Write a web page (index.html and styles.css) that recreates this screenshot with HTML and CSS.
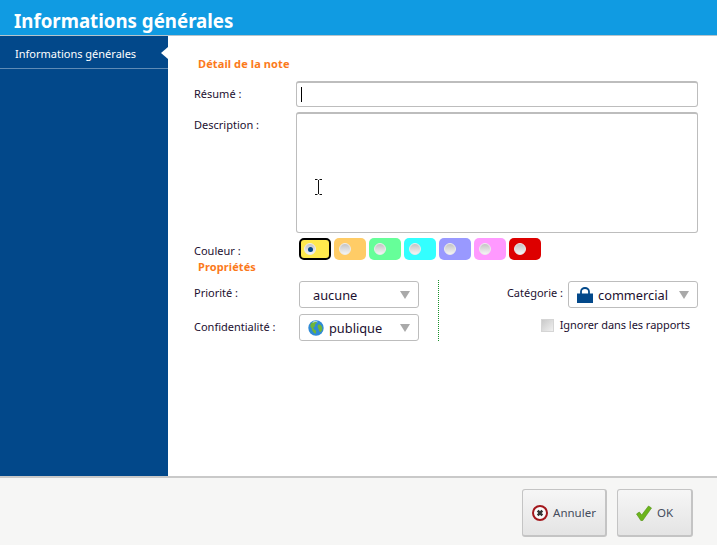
FILE: index.html
```html
<!DOCTYPE html>
<html lang="fr">
<head>
<meta charset="utf-8">
<title>Informations générales</title>
<link rel="stylesheet" href="styles.css">
</head>
<body>
<div class="app">
  <header class="header">Informations générales</header>
  <div class="main">
    <nav class="sidebar">
      <div class="nav-item">Informations générales<span class="nav-arrow"></span></div>
    </nav>
    <section class="content">
      <h2 class="section-title first">Détail de la note</h2>
      <div class="row row-resume">
        <label class="label">Résumé :</label>
        <div class="input"><span class="caret"></span></div>
      </div>
      <div class="row row-desc">
        <label class="label">Description :</label>
        <div class="textarea">
          <svg class="ibeam" width="7" height="16" viewBox="0 0 7 16"><path d="M0 .5h2.500M4.500 .5H7M3.500 1v14M0 15.500h2.500M4.500 15.500H7" fill="none" stroke="#111" stroke-width="1"/></svg>
        </div>
      </div>
      <div class="row row-color">
        <label class="label">Couleur :</label>
        <div class="swatches">
          <span class="swatch sw-yellow selected"><i class="radio on"></i></span>
          <span class="swatch sw-orange"><i class="radio"></i></span>
          <span class="swatch sw-green"><i class="radio"></i></span>
          <span class="swatch sw-cyan"><i class="radio"></i></span>
          <span class="swatch sw-blue"><i class="radio"></i></span>
          <span class="swatch sw-pink"><i class="radio"></i></span>
          <span class="swatch sw-red"><i class="radio"></i></span>
        </div>
      </div>
      <h2 class="section-title second">Propriétés</h2>
      <div class="props">
        <div class="props-left">
          <div class="prop-row">
            <label class="label">Priorité :</label>
            <div class="select sel-left"><span class="sel-text plain">aucune</span><span class="arrow"></span></div>
          </div>
          <div class="prop-row">
            <label class="label">Confidentialité :</label>
            <div class="select sel-left">
              <svg class="globe" width="16" height="16" viewBox="0 0 17 17"><circle cx="8.500" cy="8.500" r="8.200" fill="#2f8ad6"/><path d="M3 4c2-2 4-3 6-2.500 1 1 0 2-1 2.500S8 7 6.500 7.500 6 10 7.500 10.500 9 13 8 14.500C6 14 4 11 4 9 2.500 8 2 6 3 4zM11 5c2-.5 3.500 1 4 3s0 4-2 5c-1.500-1-1.500-3-2-4s-1.500-3 0-4z" fill="#6fb53a"/><path d="M5 2.500c2-1.200 4-1 5-.5" stroke="#cfe6f5" stroke-width="1" fill="none"/></svg>
              <span class="sel-text">publique</span><span class="arrow"></span>
            </div>
          </div>
        </div>
        <div class="props-divider"></div>
        <div class="props-right">
          <div class="prop-row cat-row">
            <label class="label">Catégorie :</label>
            <div class="select sel-right">
              <svg class="bag" width="16" height="16" viewBox="0 0 16 16"><path d="M0 6.500h16V16H0z" fill="#02488a"/><path d="M4 7V4.500a4 3.500 0 0 1 8 0V7" fill="none" stroke="#02488a" stroke-width="1.800"/></svg>
              <span class="sel-text">commercial</span><span class="arrow"></span>
            </div>
          </div>
          <div class="check-row">
            <span class="checkbox"></span>
            <span class="check-label">Ignorer dans les rapports</span>
          </div>
        </div>
      </div>
    </section>
  </div>
  <footer class="footer">
    <button class="btn btn-cancel">
      <svg width="16" height="16" viewBox="0 0 16 16"><circle cx="8" cy="8" r="7" fill="#fafafa" stroke="#a3171c" stroke-width="2"/><path d="M5.700 5.700l4.600 4.600M10.300 5.700l-4.600 4.600" stroke="#333" stroke-width="2.400"/></svg>
      <span>Annuler</span>
    </button>
    <button class="btn btn-ok">
      <svg width="16" height="16" viewBox="0 0 16 16"><path d="M.5 9l2.800-2 2.400 3L12.500 1 15.500 3 6.500 15.800 5 15.800z" fill="#6cb51c" stroke="#4f8f12" stroke-width=".6"/></svg>
      <span>OK</span>
    </button>
  </footer>
</div>
</body>
</html>
```
FILE: styles.css
```css
* { box-sizing: border-box; }
html, body { margin: 0; padding: 0; }
body {
  width: 717px;
  height: 545px;
  overflow: hidden;
  font-family: "Noto Sans", "Open Sans", sans-serif;
  font-size: 11px;
  color: #1c1030;
  background: #fff;
}
.app { display: flex; flex-direction: column; height: 545px; }
.header {
  height: 36px;
  flex: none;
  padding: 7px 0 0 14px;
  background: #109be2;
  border-bottom: 1px solid #b5c4cc;
  color: #fff;
  font-size: 18.700px;
  font-weight: 700;
  line-height: 28px;
}
.main { flex: 1; display: flex; min-height: 0; }
.sidebar { width: 168px; flex: none; background: #02488a; }
.nav-item {
  position: relative;
  height: 33px;
  padding-left: 15px;
  line-height: 36px;
  color: #fff;
  border-bottom: 1px solid #5f8bb5;
}
.nav-arrow {
  position: absolute;
  right: 0;
  top: 11px;
  border-style: solid;
  border-width: 6px 7px 6px 0;
  border-color: transparent #fff transparent transparent;
}
.content { flex: 1; padding: 0 19px 0 26px; position: relative; }
.section-title {
  margin: 0 0 0 4px;
  font-size: 11px;
  font-weight: 700;
  line-height: 16px;
  letter-spacing: .1px;
  color: #fb7a1b;
}
.section-title.first { padding-top: 20px; height: 36px; }
.section-title.second { height: 16px; margin-top: -1px; }
.row { display: flex; }
.label { display: block; flex: none; line-height: 16px; }
.row .label { width: 102px; }
.row-resume { margin-top: 9px; height: 26px; align-items: center; }
.row-resume .label { margin-top: -1px; }
.input {
  flex: 1;
  height: 26px;
  border: 1px solid #bdbdbd;
  border-top-width: 2px;
  border-radius: 3px;
  padding: 4px 0 0 4px;
}
.caret { display: block; width: 1px; height: 15px; background: #000; }
.row-desc { margin-top: 5px; height: 121px; }
.row-desc .label { padding-top: 5px; }
.textarea {
  flex: 1;
  position: relative;
  border: 1px solid #bdbdbd;
  border-top-width: 2px;
  border-radius: 3px;
}
.ibeam { position: absolute; left: 18px; top: 65px; }
.row-color { margin-top: 5px; height: 22px; }
.row-color .label { width: 105px; padding-top: 5px; }
.swatches { display: flex; gap: 3px; }
.swatch {
  width: 32px;
  height: 22px;
  border-radius: 5px;
  padding: 5px 0 0 5px;
  display: block;
}
.swatch.selected { border: 2px solid #000; padding: 3px 0 0 3px; }
.sw-yellow { background: #ffe94d; }
.sw-orange { background: #ffcc66; }
.sw-green { background: #66ff99; }
.sw-cyan { background: #33ffff; }
.sw-blue { background: #9999ff; }
.sw-pink { background: #ff99ff; }
.sw-red { background: #dd0000; }
.radio {
  display: block;
  position: relative;
  width: 12px;
  height: 12px;
  border-radius: 50%;
  background: linear-gradient(#c4c4c4, #f4f4f4);
  border: 1px solid #ececec;
}
.radio.on::after {
  content: "";
  position: absolute;
  left: 2.500px;
  top: 2.500px;
  width: 5px;
  height: 5px;
  border-radius: 50%;
  background: #02488a;
}
.props { display: flex; margin-top: 6px; height: 61px; }
.props-left { width: 244px; display: flex; flex-direction: column; gap: 6px; flex: none; }
.prop-row { display: flex; align-items: center; height: 27px; }
.prop-row .label { margin-top: -3px; }
.props-left .prop-row + .prop-row .label { margin-top: -2px; }
.props-left .label { width: 105px; }
.select {
  position: relative;
  display: flex;
  align-items: center;
  height: 27px;
  border: 1px solid #bdbdbd;
  border-radius: 3px;
  font-size: 12.800px;
  flex: none;
}
.sel-left { width: 120px; padding-left: 8px; }
.sel-right { width: 130px; padding-left: 8px; margin-left: 5px; }
.sel-text { margin-left: 5px; margin-top: 1px; }
.arrow {
  position: absolute;
  right: 8px;
  top: 9px;
  border-style: solid;
  border-width: 8px 5px 0 5px;
  border-color: #a9a9a9 transparent transparent transparent;
}
.props-divider {
  width: 0;
  flex: none;
  height: 61px;
  margin-top: -1px;
  border-left: 1px dotted #1a8f2a;
}
.props-right { flex: 1; display: flex; flex-direction: column; align-items: flex-end; }
.check-row { display: flex; align-items: center; margin-top: 9px; padding-right: 8px; }
.checkbox {
  width: 13px;
  height: 13px;
  border: 1px solid #d5d5d5;
  background: linear-gradient(135deg, #c9c9c9, #f0f0f0);
  margin-right: 6px;
}
.check-label { line-height: 16px; letter-spacing: -.04px; }
.footer {
  height: 69px;
  flex: none;
  display: flex;
  justify-content: flex-end;
  gap: 10px;
  padding: 11px 24px 0 0;
  background: #f6f6f5;
  border-top: 2px solid #c9c9c9;
}
.btn {
  display: flex;
  align-items: center;
  justify-content: center;
  gap: 5px;
  height: 48px;
  padding: 0;
  border: 1px solid #c4c4c4;
  border-right-width: 2px;
  border-bottom-width: 2px;
  border-radius: 3px;
  background: linear-gradient(#f6f6f6, #e4e4e4);
  font-family: inherit;
  font-size: 11.500px;
  color: #444c5c;
}
.btn-cancel { width: 85px; }
.btn-ok { width: 76px; }
```
